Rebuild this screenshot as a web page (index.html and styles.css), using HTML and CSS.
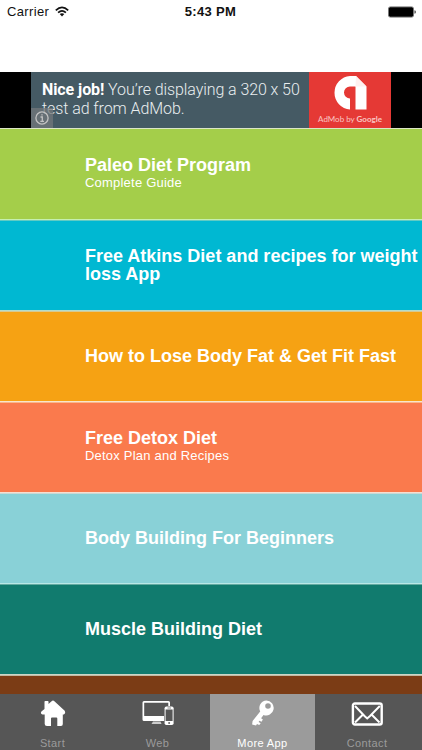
FILE: index.html
```html
<!DOCTYPE html>
<html lang="en">
<head>
<meta charset="utf-8">
<title>More App</title>
<link rel="stylesheet" href="styles.css">
</head>
<body>
<div class="screen">
  <header class="status">
    <div class="carrier"><span>Carrier</span>
      <svg width="14" height="11" viewBox="0 0 14 11" fill="none" stroke="#111" stroke-width="1.7"><path d="M.8 4.3Q7-1.6 13.2 4.3M3.1 6.6Q7 3 10.9 6.6"/><path d="M4.7 8.1Q7 6.2 9.3 8.1L7 10.5Z" fill="#111" stroke="none"/></svg>
    </div>
    <div class="time">5:43 PM</div>
    <svg class="battery" width="28" height="12" viewBox="0 0 28 12"><rect x=".5" y=".9" width="25" height="10.2" rx="1.8" fill="#000" stroke="#777"/><path d="M26.5 4.2q1.3.3 1.3 1.8t-1.3 1.8z" fill="#333"/></svg>
  </header>
  <section class="ad">
    <div class="banner">
      <p class="copy"><b>Nice job!</b> You’re displaying a 320 x 50<br>test ad from AdMob.</p>
      <div class="brand">
        <svg width="34" height="35" viewBox="0 0 34 35"><path d="M17 0H23L33.500 10.500V33.500H22.500V10.500H17A6 6 0 0 0 17 22.500V33.500A16.800 16.800 0 0 1 17 0Z" fill="#fff"/><path d="M22.500 10.500H33.500L23 0Z" fill="#fff0ef"/></svg>
        <span>AdMob by <b>Google</b></span>
      </div>
      <span class="info"><svg width="14" height="14" viewBox="0 0 14 14" fill="none" stroke="#c3c3c3" stroke-width="1.300"><circle cx="7" cy="7" r="6.100"/><path d="M5.500 6H7.300V10.300M5.300 10.300H9M7 3.200V4.600"/></svg></span>
    </div>
  </section>
  <main class="list">
    <article class="row green"><h2>Paleo Diet Program</h2><p>Complete Guide</p></article>
    <article class="row cyan"><h2>Free Atkins Diet and recipes for weight loss App</h2></article>
    <article class="row orange"><h2>How to Lose Body Fat &amp; Get Fit Fast</h2></article>
    <article class="row coral"><h2>Free Detox Diet</h2><p>Detox Plan and Recipes</p></article>
    <article class="row aqua"><h2>Body Building For Beginners</h2></article>
    <article class="row teal"><h2>Muscle Building Diet</h2></article>
    <article class="row brown"></article>
  </main>
  <nav class="tabs">
    <a class="tab">
      <svg width="26" height="27" viewBox="0 0 26 27"><path d="M4.500 9V1.700Q4.500 1 5.200 1H7.800Q8.500 1 8.500 1.700V4L11.600 1.200Q13 0 14.400 1.200L24.700 10.800Q26 13.500 23.800 14.400H22.800V24Q22.800 26 21 26H17.300V18.500Q17.300 17.500 16.300 17.500H12Q11 17.500 11 18.500V26H7Q4.700 26 4.700 24V14.400H2.500Q0 13.500 1.400 11.500Z" fill="#fff"/></svg>
      <span>Start</span></a>
    <a class="tab">
      <svg width="32" height="26" viewBox="0 0 32 26"><path fill-rule="evenodd" d="M2 .5H26.500Q28 .5 28 2V5.500H26.300V2.200H2.200V15.500H22V20.500H2Q.5 20.500 .5 19V2Q.5 .5 2 .5Z" fill="#fff"/><path d="M11 21H18.500L19.500 23.500H9.500Z" fill="#ccc"/><rect x="22.600" y="6" width="9" height="18.500" rx="1.700" fill="#fff"/><rect x="23.600" y="9" width="7" height="11.500" fill="#565656"/><path d="M25.500 7.500H29" stroke="#888"/><circle cx="27.100" cy="22.400" r="1" fill="#666"/></svg>
      <span>Web</span></a>
    <a class="tab active">
      <svg width="24" height="27" viewBox="0 0 24 27"><path fill-rule="evenodd" d="M15.400.5A7.500 7.500 0 1 1 12.500 15L10.100 18.200L11.900 19.500L10.500 21.700L8.400 20.700L7.600 21.900L9.700 23.200L8.200 25L6 24L5 25.500L1.100 24.400L1.600 21L9.200 11.500A7.500 7.500 0 0 1 15.400.5ZM17 3.200A2.800 2.800 0 1 0 17 8.800A2.800 2.800 0 1 0 17 3.200Z" fill="#fff"/></svg>
      <span>More App</span></a>
    <a class="tab contact">
      <svg width="32" height="26" viewBox="0 0 32 26" fill="none" stroke="#fff"><rect x="1.900" y="3" width="28.800" height="21" rx="2" stroke-width="2.400"/><path d="M4 5.500L13.500 15.500L16.200 18L19 15.500L28.800 5.500M4 22L12 14M28.500 22L20.500 14" stroke-width="2"/></svg>
      <span>Contact</span></a>
  </nav>
</div>
</body>
</html>
```
FILE: styles.css
```css
* { box-sizing: border-box; }
body, h2, p { margin: 0; }
body { background: #fff; font-family: "Liberation Sans", Arial, sans-serif; }
.screen { width: 422px; height: 750px; display: flex; flex-direction: column; overflow: hidden; }
.status { height: 72px; flex: none; display: grid; grid-template-columns: 1fr auto 1fr; align-items: start; padding: 4px 6px 0 5px; font-size: 13px; line-height: 16px; color: #111; }
.carrier { display: flex; align-items: center; gap: 6px; padding-left: 2px; letter-spacing: .35px; }
.carrier svg { margin-top: -1px; }
.time { font-weight: bold; letter-spacing: .35px; }
.battery { justify-self: end; margin-top: 2px; }
.ad { height: 57px; flex: none; background: #000; border-bottom: 1px solid #dce6c5; padding: 0 31px; }
.banner { height: 56px; display: flex; position: relative; background: #455a64; }
.copy { width: 278px; padding: 8px 0 0 11px; font: 300 16px/19px Roboto, sans-serif; letter-spacing: -.08px; color: #e9eef0; white-space: nowrap; }
.copy b { font-weight: 700; color: #fff; }
.brand { width: 82px; background: #e53935; display: flex; flex-direction: column; align-items: center; padding-top: 4px; color: #fac6c3; font: 8px/10px Lato, sans-serif; white-space: nowrap; }
.brand svg { margin-bottom: 3px; }
.info { position: absolute; left: 0; bottom: 0; width: 22px; height: 20px; background: rgba(115, 120, 123, .75); padding: 3px 4px; line-height: 0; }
.list { flex: 1; min-height: 0; overflow: hidden; }
.row { height: 91px; padding-left: 85px; border-bottom: 1px solid; display: flex; flex-direction: column; justify-content: center; color: #fff; }
.row h2 { font-size: 18px; line-height: 18px; }
.row p { font-size: 13px; line-height: 18px; letter-spacing: .21px; }
.green { background: #a4ce4a; border-color: #c6efaf; }
.cyan { background: #00b8d2; border-color: #b3dccb; box-shadow: inset 0 1px #60cbc4; }
.orange { background: #f6a213; border-color: #f8e6cb; box-shadow: inset 0 1px #d6c990; }
.coral { background: #fa7a4d; border-color: #f6dfd2; box-shadow: inset 0 1px #f9b78a; }
.aqua { background: #89d1d7; border-color: #b9e8e6; box-shadow: inset 0 1px #cbd9d4; }
.teal { background: #117b6e; border-color: #c9d7c8; box-shadow: inset 0 1px #63aaa1; }
.brown { background: #7b3c15; border: 0; box-shadow: inset 0 1px #c2b9a1; }
.tabs { height: 56px; flex: none; display: grid; grid-template-columns: 105px 105px 105px 107px; background: #565656; }
.tab { display: flex; flex-direction: column; align-items: center; padding-top: 6px; color: #9b9b9b; font-size: 11px; line-height: 12px; letter-spacing: .4px; }
.tab svg { height: 27px; margin-bottom: 10px; }
.tab.active { background: #9b9b9b; color: #fff; }
.tab.contact { padding-right: 3px; }
```
